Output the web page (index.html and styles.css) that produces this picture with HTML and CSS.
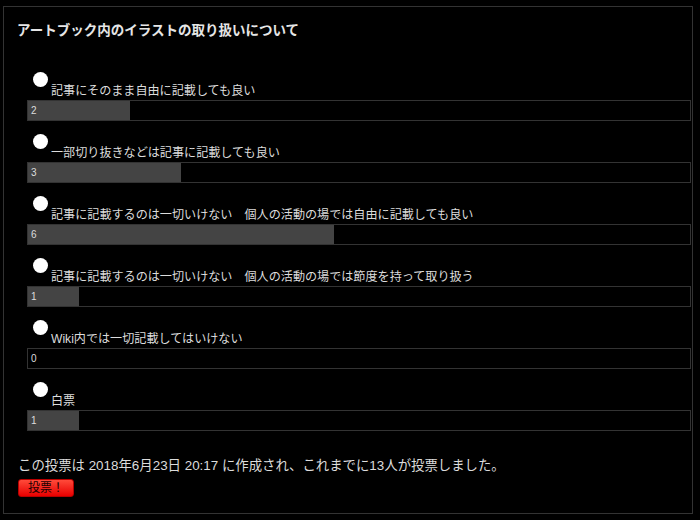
FILE: index.html
```html
<!DOCTYPE html>
<html lang="ja">
<head>
<meta charset="utf-8">
<title>アートブック内のイラストの取り扱いについて</title>
<link rel="stylesheet" href="styles.css">
</head>
<body>
<div class="poll">
  <h2 class="poll-title">アートブック内のイラストの取り扱いについて</h2>
  <ul class="choices">
    <li class="choice">
      <label class="choice-label"><span class="dot"></span><span class="choice-text">記事にそのまま自由に記載しても良い</span></label>
      <div class="bar"><div class="fill" style="width:15.38%"></div><span class="count">2</span></div>
    </li>
    <li class="choice">
      <label class="choice-label"><span class="dot"></span><span class="choice-text">一部切り抜きなどは記事に記載しても良い</span></label>
      <div class="bar"><div class="fill" style="width:23.08%"></div><span class="count">3</span></div>
    </li>
    <li class="choice">
      <label class="choice-label"><span class="dot"></span><span class="choice-text">記事に記載するのは一切いけない　個人の活動の場では自由に記載しても良い</span></label>
      <div class="bar"><div class="fill" style="width:46.15%"></div><span class="count">6</span></div>
    </li>
    <li class="choice">
      <label class="choice-label"><span class="dot"></span><span class="choice-text">記事に記載するのは一切いけない　個人の活動の場では節度を持って取り扱う</span></label>
      <div class="bar"><div class="fill" style="width:7.69%"></div><span class="count">1</span></div>
    </li>
    <li class="choice">
      <label class="choice-label"><span class="dot"></span><span class="choice-text">Wiki内では一切記載してはいけない</span></label>
      <div class="bar"><div class="fill" style="width:0%"></div><span class="count">0</span></div>
    </li>
    <li class="choice">
      <label class="choice-label"><span class="dot"></span><span class="choice-text">白票</span></label>
      <div class="bar"><div class="fill" style="width:7.69%"></div><span class="count">1</span></div>
    </li>
  </ul>
  <p class="summary">この投票は 2018年6月23日 20:17 に作成され、これまでに13人が投票しました。</p>
  <button class="vote" type="button">投票！</button>
</div>
</body>
</html>
```

FILE: styles.css
```css
html, body {
  margin: 0;
  background: #000;
}

body {
  font-family: "Liberation Sans", "Noto Sans CJK JP", sans-serif;
  color: #dcdcdc;
}

.poll {
  box-sizing: border-box;
  width: 690px;
  height: 508px;
  margin: 6px 0 0 3px;
  border: 1px solid #333;
  padding: 14px 1px 0 13px;
}

.poll-title {
  margin: 0;
  font-size: 13.5px;
  line-height: 20px;
  font-weight: bold;
  color: #e6e6e6;
}

.choices {
  list-style: none;
  margin: 31px 0 0 10px;
  padding: 0;
  display: flex;
  flex-direction: column;
  gap: 13px;
}

.choice {
  display: flex;
  flex-direction: column;
}

.choice-label {
  display: flex;
  align-items: flex-start;
  height: 28px;
  padding-left: 6px;
}

.dot {
  flex: none;
  width: 15px;
  height: 15px;
  border-radius: 50%;
  background: #fff;
  margin-right: 3px;
}

.choice-text {
  margin-top: 11px;
  font-size: 12.1px;
  line-height: 16px;
  white-space: nowrap;
}

.bar {
  display: grid;
  height: 19px;
  border: 1px solid #333;
  background: #000;
}

.fill,
.count {
  grid-area: 1 / 1;
}

.fill {
  background: #444;
}

.count {
  align-self: center;
  padding-left: 3px;
  font-size: 10px;
  line-height: 12px;
  color: #dcdcdc;
}

.summary {
  margin: 26px 0 0 1px;
  font-size: 13.4px;
  line-height: 18px;
}

.vote {
  display: block;
  margin: 4px 0 0 1px;
  width: 56px;
  height: 18px;
  padding: 0;
  border: 1px solid #b80000;
  border-radius: 3px;
  background: linear-gradient(#ff4a3a, #e80000);
  color: #1a0000;
  font-family: "Liberation Sans", "Noto Sans CJK JP", sans-serif;
  font-size: 12px;
  line-height: 16px;
}
```
